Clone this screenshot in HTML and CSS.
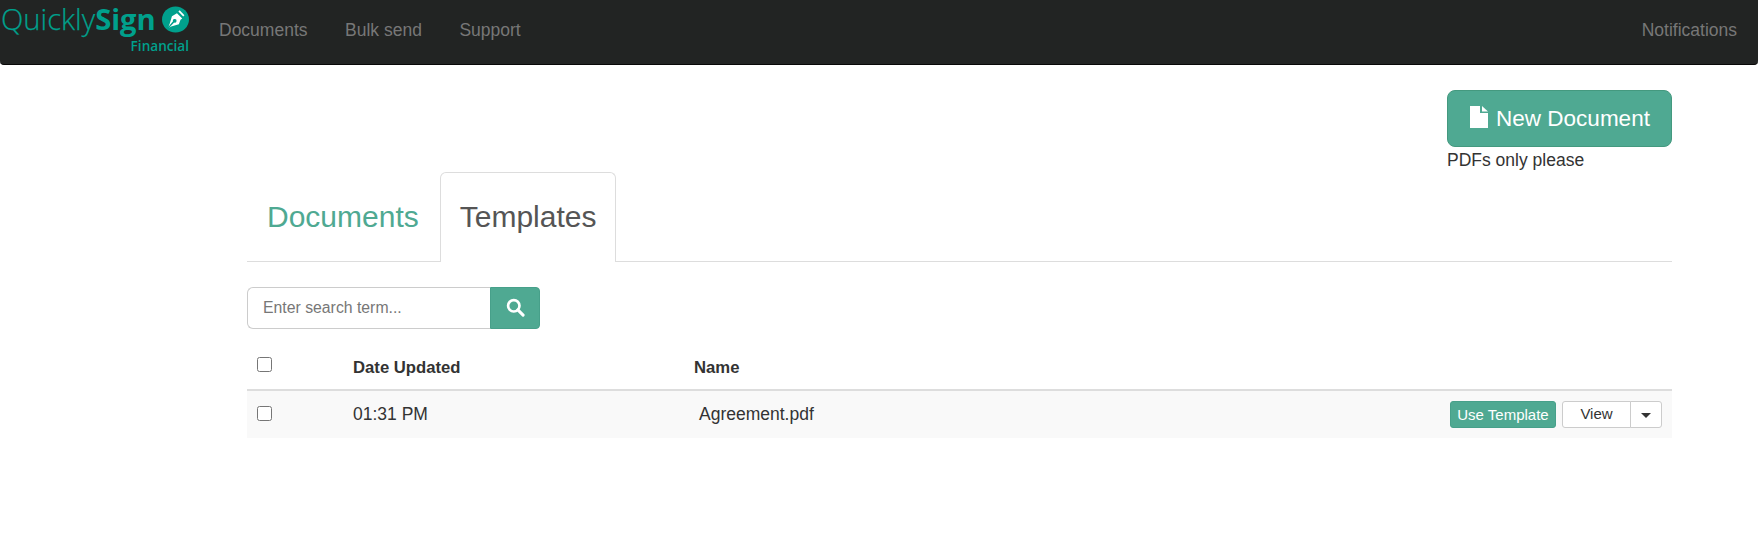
FILE: index.html
```html
<!DOCTYPE html>
<html lang="en">
<head>
<meta charset="utf-8">
<title>QuicklySign Financial</title>
<link rel="stylesheet" href="styles.css">
</head>
<body>
<nav class="navbar">
  <a class="brand" href="#">
    <span class="brand-top"><span class="brand-light">Quickly</span><span class="brand-bold">Sign</span>
      <svg class="brand-icon" viewBox="0 0 28 28" width="27" height="27" aria-hidden="true">
        <ellipse cx="14" cy="14" rx="14" ry="13.5" fill="#00a08c"/>
        <path d="M15.500 7.500l5.500 5.500-1.800 1.300-1.700 4.700-8 2.300-2.200 1.200 5.300-5.400a1.900 1.900 0 1 0-1.200-1.200L6.700 21.500l1.200-2.900 2.400-8z" fill="#fff"/>
        <path d="M17 5.800l1.300-1.300 5 5-1.300 1.300z" fill="#fff"/>
      </svg>
    </span>
    <span class="brand-sub">Financial</span>
  </a>
  <a class="nav-link" href="#">Documents</a>
  <a class="nav-link" href="#">Bulk send</a>
  <a class="nav-link" href="#">Support</a>
  <a class="nav-link nav-right" href="#">Notifications</a>
</nav>

<main class="container">
  <div class="upload">
    <div class="upload-box">
      <button class="btn-new" type="button">
        <svg class="file-icon" viewBox="0 0 18 22" width="18" height="22" aria-hidden="true">
          <path d="M0 0h10v7h8v15H0z" fill="#fff"/>
          <path d="M12 0l6 5.500h-6z" fill="#fff"/>
        </svg>
        New Document
      </button>
      <div class="upload-note">PDFs only please</div>
    </div>
  </div>

  <ul class="tabs">
    <li class="tab"><a href="#">Documents</a></li>
    <li class="tab tab-active"><a href="#">Templates</a></li>
  </ul>

  <form class="search">
    <input class="search-input" type="text" placeholder="Enter search term...">
    <button class="search-btn" type="button" aria-label="Search">
      <svg class="search-icon" viewBox="0 0 20 20" width="19" height="19" aria-hidden="true">
        <circle cx="8.200" cy="8.200" r="6" fill="none" stroke="#fff" stroke-width="2.800"/>
        <path d="M12.500 12.500l5.500 5.500" stroke="#fff" stroke-width="3.200" stroke-linecap="round"/>
      </svg>
    </button>
  </form>

  <table class="table">
    <colgroup>
      <col class="col-check">
      <col class="col-date">
      <col class="col-name">
      <col>
    </colgroup>
    <thead>
      <tr>
        <th><input type="checkbox" class="check"></th>
        <th>Date Updated</th>
        <th>Name</th>
        <th></th>
      </tr>
    </thead>
    <tbody>
      <tr>
        <td><input type="checkbox" class="check"></td>
        <td>01:31 PM</td>
        <td class="cell-name">Agreement.pdf</td>
        <td class="cell-actions">
          <div class="actions">
            <button class="btn-use" type="button">Use Template</button>
            <div class="btn-group">
              <button class="btn-view" type="button">View</button>
              <button class="btn-caret" type="button" aria-label="More"><span class="caret"></span></button>
            </div>
          </div>
        </td>
      </tr>
    </tbody>
  </table>
</main>
</body>
</html>
```

FILE: styles.css
```css
* { box-sizing: border-box; }

html, body { margin: 0; padding: 0; }

body {
  background: #fff;
  color: #333;
  font-family: "Liberation Sans", Arial, sans-serif;
  font-size: 17.5px;
  line-height: 1.42857;
}

a { text-decoration: none; }

.navbar {
  display: flex;
  align-items: flex-start;
  height: 65px;
  background: #222423;
  border-bottom: 1px solid #080808;
  border-radius: 0 0 4px 4px;
}

.brand {
  display: flex;
  flex-direction: column;
  width: 219px;
  padding-left: 1px;
  color: #00a08c;
}

.brand-top {
  display: flex;
  align-items: center;
  height: 38px;
  font-family: "Open Sans", sans-serif;
  font-size: 29.200px;
  line-height: 38px;
}

.brand-light { font-weight: 300; -webkit-text-stroke: 0.25px #00a08c; }
.brand-bold { font-weight: 700; }

.brand-icon { margin-left: 6px; flex: none; }

.brand-sub {
  width: 188px;
  margin-top: -1px;
  text-align: right;
  font-family: "Open Sans", sans-serif;
  font-size: 13.600px;
  font-weight: 600;
  line-height: 18px;
}

.nav-link {
  margin-right: 37.500px;
  padding-top: 19px;
  color: #777;
  line-height: 23px;
}

.nav-right {
  margin-left: auto;
  margin-right: 21px;
}

.container {
  width: 1425px;
  margin-left: 247px;
}

.upload {
  display: flex;
  justify-content: flex-end;
  padding-top: 25px;
}

.upload-box { width: 225px; }

.btn-new {
  display: flex;
  align-items: center;
  justify-content: center;
  gap: 8px;
  width: 225px;
  height: 57px;
  padding: 0 0 0 1px;
  background: #4fa992;
  border: 1px solid #44997f;
  border-radius: 8px;
  color: #fff;
  font-family: inherit;
  font-size: 22.500px;
}

.file-icon { margin-top: -4px; }

.upload-note {
  height: 23px;
  margin-top: 2px;
  line-height: 23px;
}

.tabs {
  display: flex;
  height: 90px;
  margin: 0;
  padding: 0;
  list-style: none;
  border-bottom: 1px solid #ddd;
}

.tab {
  height: 90px;
  padding: 22px 20px 0 19px;
  border: 1px solid transparent;
  border-bottom: 0;
  font-size: 30px;
  line-height: 43px;
}

.tab a { color: #4fa992; }

.tab-active {
  padding-right: 19px;
  background: #fff;
  border-color: #ddd;
  border-radius: 6px 6px 0 0;
}

.tab-active a { color: #555; }

.search {
  display: flex;
  margin-top: 25px;
}

.search-input {
  width: 243px;
  height: 42px;
  padding: 0 15px;
  border: 1px solid #ccc;
  border-right: 0;
  border-radius: 6px 0 0 6px;
  font-family: inherit;
  font-size: 15.800px;
  color: #555;
  outline: none;
}

.search-input::placeholder { color: #777; opacity: 1; }

.search-btn {
  display: flex;
  align-items: center;
  justify-content: center;
  width: 50px;
  height: 42px;
  padding: 0 0 2px;
  background: #4fa992;
  border: 1px solid #47a08a;
  border-radius: 0 4px 4px 0;
}

.table {
  width: 100%;
  margin-top: 14px;
  border-collapse: collapse;
  table-layout: fixed;
}

.col-check { width: 106px; }
.col-date { width: 341px; }
.col-name { width: 400px; }

.table th, .table td {
  padding: 0;
  text-align: left;
  vertical-align: middle;
}

.table th {
  height: 47px;
  border-bottom: 2px solid #ddd;
  font-size: 16.700px;
  font-weight: 700;
  padding-top: 4px;
}

.table th:first-child, .table td:first-child { padding-left: 10px; }

.table th:first-child { padding-top: 0; padding-bottom: 3px; }

.table td { height: 48px; }

.table td:first-child { padding-bottom: 2px; }

.table tbody tr { background: #f9f9f9; }

.cell-name { padding-left: 5px !important; }

.check {
  display: block;
  width: 15px;
  height: 15px;
  margin: 0;
}

.actions {
  display: flex;
  justify-content: flex-end;
  align-items: center;
  gap: 6px;
  padding-right: 10px;
}

.btn-use {
  width: 106px;
  height: 27px;
  padding: 0;
  background: #4fa992;
  border: 1px solid #47a08a;
  border-radius: 3px;
  color: #fff;
  font-family: inherit;
  font-size: 15px;
}

.btn-group { display: flex; }

.btn-view, .btn-caret {
  height: 27px;
  padding: 0;
  background: #fff;
  border: 1px solid #ccc;
  color: #333;
  font-family: inherit;
  font-size: 15px;
}

.btn-view {
  width: 69px;
  padding-bottom: 2px;
  border-radius: 3px 0 0 3px;
}

.btn-caret {
  display: flex;
  align-items: center;
  justify-content: center;
  width: 32px;
  margin-left: -1px;
  padding-top: 1px;
  border-radius: 0 3px 3px 0;
}

.caret {
  width: 0;
  height: 0;
  border-top: 5px solid #333;
  border-left: 5px solid transparent;
  border-right: 5px solid transparent;
}
```
